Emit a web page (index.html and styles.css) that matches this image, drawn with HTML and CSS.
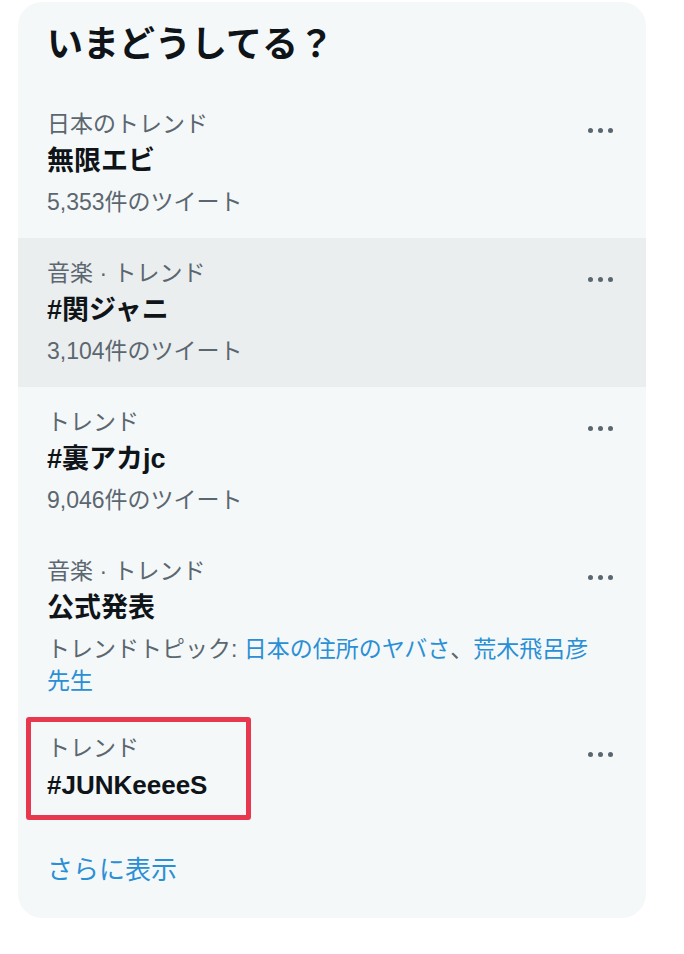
FILE: index.html
```html
<!DOCTYPE html>
<html lang="ja">
<head>
  <meta charset="UTF-8">
  <meta name="viewport" content="width=device-width, initial-scale=1.0">
  <title>いまどうしてる？</title>
  <link rel="stylesheet" href="styles.css">
</head>
<body>
  <section class="trends">
    <h1 class="trends-title">いまどうしてる？</h1>

    <div class="trend">
      <div class="trend-meta">日本のトレンド</div>
      <div class="trend-name">無限エビ</div>
      <div class="trend-count">5,353件のツイート</div>
      <span class="more"><i></i><i></i><i></i></span>
    </div>

    <div class="trend hover">
      <div class="trend-meta">音楽 · トレンド</div>
      <div class="trend-name">#関ジャニ</div>
      <div class="trend-count">3,104件のツイート</div>
      <span class="more"><i></i><i></i><i></i></span>
    </div>

    <div class="trend">
      <div class="trend-meta">トレンド</div>
      <div class="trend-name">#裏アカjc</div>
      <div class="trend-count">9,046件のツイート</div>
      <span class="more"><i></i><i></i><i></i></span>
    </div>

    <div class="trend">
      <div class="trend-meta">音楽 · トレンド</div>
      <div class="trend-name">公式発表</div>
      <div class="trend-topics">トレンドトピック: <a href="#">日本の住所のヤバさ</a>、<a href="#">荒木飛呂彦先生</a></div>
      <span class="more"><i></i><i></i><i></i></span>
    </div>

    <div class="trend">
      <div class="trend-meta">トレンド</div>
      <div class="trend-name latin">#JUNKeeeeS</div>
      <span class="more"><i></i><i></i><i></i></span>
      <span class="highlight"></span>
    </div>

    <a class="show-more" href="#">さらに表示</a>
  </section>
</body>
</html>
```

FILE: styles.css
```css
body {
  margin: 0;
  background: #fff;
  font-family: "Liberation Sans", "Noto Sans CJK JP", sans-serif;
  color: #0f1419;
}
.trends {
  margin: 2px 38px 0 18px;
  width: 628px;
  background: #f5f8f8;
  border-radius: 24px;
  overflow: hidden;
  padding-bottom: 32px;
}
.trends-title {
  margin: 0;
  padding: 20px 29px 21px;
  font-size: 36px;
  line-height: 46px;
  font-weight: 700;
}
.trend {
  position: relative;
  padding: 19px 45px 16px 29px;
}
.trend.hover {
  background: #ebeeef;
}
.trend-meta {
  font-size: 23px;
  line-height: 32px;
  color: #5b6770;
}
.trend-name {
  font-size: 27px;
  line-height: 42px;
  font-weight: 700;
}
.trend-name.latin {
  font-size: 26px;
}
.trend-count {
  font-size: 23px;
  line-height: 40px;
  color: #5b6770;
}
.trend-topics {
  padding-top: 4px;
  font-size: 23px;
  line-height: 32px;
  color: #5b6770;
}
.trend-topics a {
  color: #2b8fd6;
  text-decoration: none;
}
.more {
  position: absolute;
  top: 39px;
  right: 33px;
  display: flex;
  gap: 5px;
}
.more i {
  width: 5px;
  height: 5px;
  border-radius: 50%;
  background: #5b6770;
}
.highlight {
  position: absolute;
  left: 8px;
  top: 4px;
  width: 215px;
  height: 93px;
  border: 5px solid #e8384f;
  border-radius: 3px;
}
.show-more {
  display: block;
  padding: 32px 29px 0;
  font-size: 26px;
  line-height: 32px;
  color: #2b8fd6;
  text-decoration: none;
}
```
